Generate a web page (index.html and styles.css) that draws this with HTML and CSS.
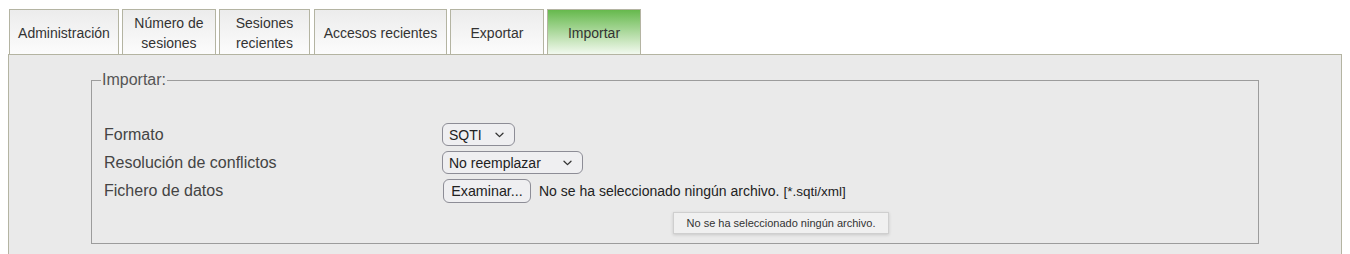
FILE: index.html
```html
<!DOCTYPE html>
<html lang="es">
<head>
<meta charset="utf-8">
<title>Importar</title>
<link rel="stylesheet" href="styles.css">
</head>
<body>
<nav class="tabs">
  <div class="tab tab-admin">Administración</div>
  <div class="tab tab-wrap">Número de sesiones</div>
  <div class="tab tab-wrap tab-sm">Sesiones recientes</div>
  <div class="tab tab-acc">Accesos recientes</div>
  <div class="tab">Exportar</div>
  <div class="tab active">Importar</div>
</nav>
<section class="panel">
  <fieldset class="box">
    <legend class="legend">Importar:</legend>
    <div class="form">
      <label class="label" for="fmt">Formato</label>
      <div class="ctrl">
        <span class="select-wrap">
          <select id="fmt" class="select sel-fmt"><option>SQTI</option></select>
          <svg class="chev" width="9" height="6" viewBox="0 0 9 6"><path d="M1 1.2 L4.5 4.6 L8 1.2" fill="none" stroke="#333" stroke-width="1.3" stroke-linecap="round" stroke-linejoin="round"/></svg>
        </span>
      </div>
      <label class="label" for="res">Resolución de conflictos</label>
      <div class="ctrl">
        <span class="select-wrap">
          <select id="res" class="select sel-res"><option>No reemplazar</option></select>
          <svg class="chev" width="9" height="6" viewBox="0 0 9 6"><path d="M1 1.2 L4.5 4.6 L8 1.2" fill="none" stroke="#333" stroke-width="1.3" stroke-linecap="round" stroke-linejoin="round"/></svg>
        </span>
      </div>
      <label class="label" for="file">Fichero de datos</label>
      <div class="ctrl">
        <button class="btn" id="file" type="button">Examinar...</button>
        <span class="nofile">No se ha seleccionado ningún archivo.</span>
        <span class="ext">[*.sqti/xml]</span>
      </div>
    </div>
  </fieldset>
</section>
<div class="tooltip">No se ha seleccionado ningún archivo.</div>
</body>
</html>
```
FILE: styles.css
```css
html, body {
  background: #ffffff;
}
body {
  margin: 8px;
  font-family: "Liberation Sans", Arial, Helvetica, sans-serif;
  color: #333;
  position: relative;
  overflow: hidden;
}
.tabs {
  display: flex;
  gap: 3px;
  padding-left: 1px;
  margin-top: 1px;
  align-items: flex-end;
}
.tab {
  box-sizing: border-box;
  height: 45px;
  min-width: 94px;
  padding: 2px 8px 0 8px;
  border: 1px solid #b4b4a2;
  border-bottom: none;
  background: linear-gradient(to bottom, #ececec, #fcfcfc);
  display: flex;
  align-items: center;
  justify-content: center;
  text-align: center;
  font-size: 14px;
  line-height: 20px;
  color: #333;
}
.tab-admin {
  width: 110px;
}
.tab-acc {
  width: 133px;
  margin-left: 1px;
}
.tab-wrap {
  width: 94px;
  padding-top: 1px;
}
.tab-sm {
  width: 91px;
  min-width: 91px;
}
.tab.active {
  background: linear-gradient(to bottom, #66b94d, #c9e6be 70%, #f2f9ef);
}
.panel {
  border: 1px solid #b4b4a2;
  background: #eaeaea;
  min-height: 220px;
  padding-top: 16px;
}
.box {
  margin: 0 82px;
  border: 1px solid #9c9c9c;
  padding: 0 12px 40px 12px;
}
.legend {
  font-size: 16px;
  line-height: 18px;
  color: #555;
  padding: 0 1px;
  margin-left: -3px;
}
.form {
  display: grid;
  grid-template-columns: 338px auto;
  row-gap: 5px;
  align-items: center;
  padding-top: 34px;
}
.label {
  font-size: 16px;
  color: #444;
}
.ctrl {
  display: flex;
  align-items: center;
  font-size: 14px;
  color: #222;
}
.select-wrap {
  position: relative;
  display: inline-flex;
}
.select {
  appearance: none;
  -webkit-appearance: none;
  box-sizing: border-box;
  height: 23px;
  border: 1px solid #8d8d96;
  border-radius: 6px;
  background: #efeff1;
  font-family: "Liberation Sans", Arial, Helvetica, sans-serif;
  font-size: 14px;
  color: #222;
  padding: 0 6px;
  margin: 0;
}
.sel-fmt { width: 73px; }
.sel-res { width: 141px; }
.chev {
  position: absolute;
  right: 11px;
  top: 9px;
  pointer-events: none;
}
.btn {
  box-sizing: border-box;
  height: 24px;
  width: 88px;
  margin-left: 1px;
  border: 1px solid #8d8d96;
  border-radius: 6px;
  background: #efeff1;
  font-family: "Liberation Sans", Arial, Helvetica, sans-serif;
  font-size: 14.3px;
  color: #222;
  padding: 0;
}
.nofile {
  margin-left: 8px;
}
.ext {
  margin-left: 4px;
  font-size: 13.5px;
}
.tooltip {
  position: absolute;
  left: 665px;
  top: 204px;
  box-sizing: border-box;
  height: 22px;
  width: 216px;
  background: #f0f0f0;
  border: 1px solid #cfcfcf;
  box-shadow: 0 1px 3px rgba(0,0,0,0.15);
  font-size: 11px;
  line-height: 20px;
  color: #333;
  text-align: center;
}
```
